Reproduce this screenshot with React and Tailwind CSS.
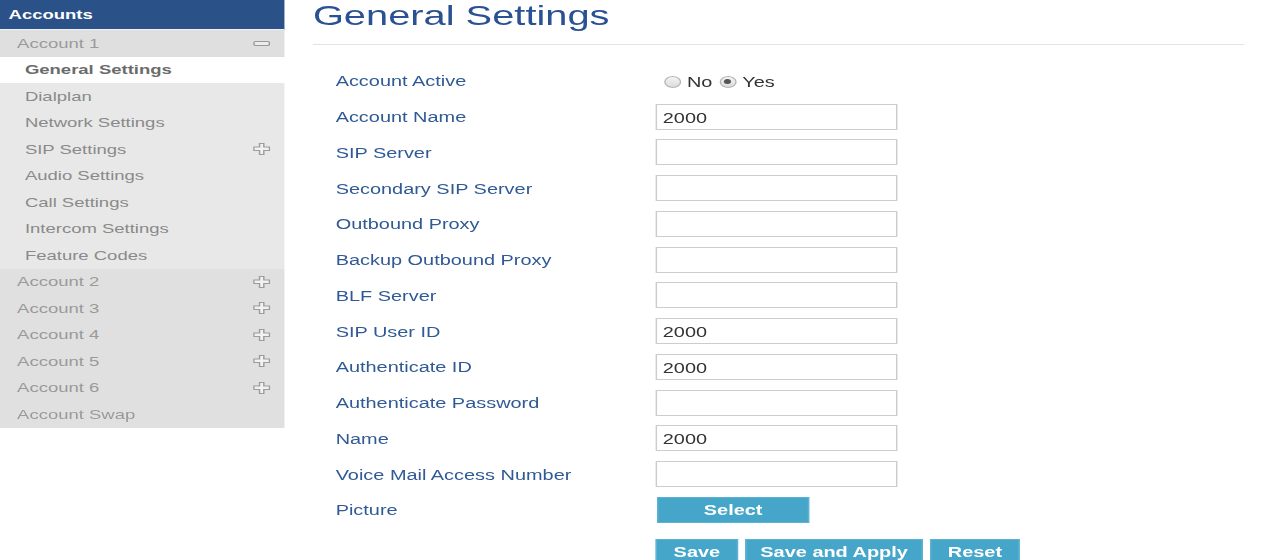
import React, { useState } from "react";

const Plus = () => (
  <svg width="12" height="12" viewBox="0 0 12 12">
    <path
      d="M4.5 0.5h3v3.5h4v3.5h-4v4h-3v-4h-4v-3.5h4z"
      fill="#f2f2f2"
      stroke="#9c9c9c"
      strokeWidth="1"
    />
  </svg>
);

const Minus = () => (
  <svg width="12" height="5" viewBox="0 0 12 5">
    <rect x="0.5" y="0.5" width="11" height="4" rx="1.5" fill="#ececec" stroke="#999" />
  </svg>
);

const subItems = [
  "General Settings",
  "Dialplan",
  "Network Settings",
  "SIP Settings",
  "Audio Settings",
  "Call Settings",
  "Intercom Settings",
  "Feature Codes",
];

const fields = [
  { label: "Account Name", value: "2000" },
  { label: "SIP Server", value: "" },
  { label: "Secondary SIP Server", value: "" },
  { label: "Outbound Proxy", value: "" },
  { label: "Backup Outbound Proxy", value: "" },
  { label: "BLF Server", value: "" },
  { label: "SIP User ID", value: "2000" },
  { label: "Authenticate ID", value: "2000" },
  { label: "Authenticate Password", value: "" },
  { label: "Name", value: "2000" },
  { label: "Voice Mail Access Number", value: "" },
];

const Radio = ({ checked }) => (
  <span className="inline-flex h-[12px] w-[12px] items-center justify-center rounded-full border border-[#b5b5b5] bg-gradient-to-b from-[#f4f4f4] to-[#dcdcdc]">
    {checked && <span className="h-[5px] w-[5px] rounded-full bg-[#555]" />}
  </span>
);

const Sidebar = () => (
  <div className="w-[200px] shrink-0 text-[13px]">
    <div className="flex h-[30px] items-center border-b border-[#eef1f5] bg-[#2b5189] pl-[6px] font-bold text-white">
      Accounts
    </div>
    <div className="flex h-[26.5px] items-center justify-between bg-[#dfdfdf] pl-[12px] pr-[10px] text-[#9a9a9a]">
      <span>Account 1</span>
      <Minus />
    </div>
    {subItems.map((item, i) => (
      <div
        key={item}
        className={
          i === 0
            ? "flex h-[26.5px] items-center bg-white pl-[17.5px] font-bold text-[#6b6b6b]"
            : "flex h-[26.5px] items-center justify-between bg-[#e8e8e8] pl-[17.5px] pr-[10px] text-[#8a8a8a]"
        }
      >
        <span>{item}</span>
        {item === "SIP Settings" && <Plus />}
      </div>
    ))}
    {["Account 2", "Account 3", "Account 4", "Account 5", "Account 6"].map((a) => (
      <div
        key={a}
        className="flex h-[26.5px] items-center justify-between bg-[#e0e0e0] pl-[12px] pr-[10px] text-[#9a9a9a]"
      >
        <span>{a}</span>
        <Plus />
      </div>
    ))}
    <div className="flex h-[26.5px] items-center bg-[#e0e0e0] pl-[12px] text-[#9a9a9a]">
      Account Swap
    </div>
  </div>
);

export default function App() {
  const [active, setActive] = useState(true);

  return (
    <div className="h-[560px] w-full overflow-hidden bg-white font-['Liberation_Sans',Arial,sans-serif]">
      <div className="flex w-[900px] origin-top-left scale-x-[1.4222]">
        <Sidebar />

        <div className="ml-[20px] w-[655px]">
          <h1 className="mt-[2px] h-[28px] text-[28px] leading-[28px] text-[#2a5191]">
            General Settings
          </h1>
          <div className="mt-[14px] border-t border-[#e3e3e3]" />

          <div className="mt-[18px] pl-[16px] text-[14px]">
            <div className="flex h-[35.75px] items-center">
              <label className="w-[225px] pt-[2px] text-[#305a95]">Account Active</label>
              <div className="ml-[6px] mt-[2px] flex items-center text-[#333]">
                <span onClick={() => setActive(false)} className="flex items-center">
                  <Radio checked={!active} />
                  <span className="ml-[4px] mt-[2px]">No</span>
                </span>
                <span onClick={() => setActive(true)} className="ml-[5px] flex items-center">
                  <Radio checked={active} />
                  <span className="ml-[4px] mt-[2px]">Yes</span>
                </span>
              </div>
            </div>

            {fields.map((f) => (
              <div key={f.label} className="flex h-[35.75px] items-center">
                <label className="w-[225px] pt-[2px] text-[#305a95]">{f.label}</label>
                <input
                  type="text"
                  defaultValue={f.value}
                  className="h-[26px] w-[170px] border border-[#cccccc] px-[4px] pt-[2px] text-[14px] text-[#333] outline-none"
                />
              </div>
            ))}

            <div className="flex h-[35.75px] items-center">
              <label className="w-[225px] pt-[2px] text-[#305a95]">Picture</label>
              <button
                type="button"
                className="ml-[1px] h-[26px] w-[107px] border border-[#5bb3d3] bg-[#46a6ca] pt-[2px] font-bold text-white"
              >
                Select
              </button>
            </div>

            <div className="ml-[225px] mt-[11px] flex gap-[5px]">
              <button type="button" className="h-[26px] w-[58px] border border-[#5bb3d3] bg-[#46a6ca] pt-[2px] font-bold text-white">
                Save
              </button>
              <button type="button" className="h-[26px] w-[125px] border border-[#5bb3d3] bg-[#46a6ca] pt-[2px] font-bold text-white">
                Save and Apply
              </button>
              <button type="button" className="h-[26px] w-[63px] border border-[#5bb3d3] bg-[#46a6ca] pt-[2px] font-bold text-white">
                Reset
              </button>
            </div>
          </div>
        </div>
      </div>
    </div>
  );
}
